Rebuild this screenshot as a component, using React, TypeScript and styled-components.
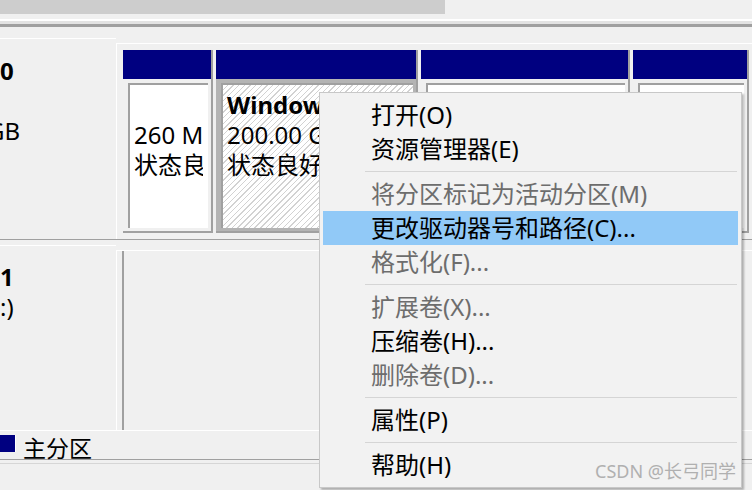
import React from "react";
import styled, { createGlobalStyle } from "styled-components";

const FONT = `"Noto Sans", "Noto Sans CJK SC", sans-serif`;

const GlobalStyle = createGlobalStyle`
  html, body {
    margin: 0;
    padding: 0;
    background: #f0f0f0;
  }
  body {
    font-family: ${FONT};
  }
`;

const Page = styled.div`
  position: relative;
  width: 752px;
  height: 490px;
  overflow: hidden;
  background: #f0f0f0;
  color: #000;
  font-family: ${FONT};
`;

const ScrollTrack = styled.div`
  height: 19px;
  background: #f0f0f0;
`;

const ScrollThumb = styled.div`
  width: 445px;
  height: 14px;
  background: #cdcdcd;
`;

const Splitter = styled.div`
  height: 3px;
  background: #e3e3e3;
  border-top: 2px solid #fff;
  border-bottom: 3px solid #a0a0a0;
`;

const DiskArea = styled.div`
  margin-top: 11px;
`;

const DiskRow = styled.div<{ $height: number; $divider?: boolean }>`
  display: grid;
  grid-template-columns: 116px 1fr;
  box-sizing: border-box;
  height: ${({ $height }) => $height}px;
  border-bottom: ${({ $divider }) => ($divider ? "1px solid #a0a0a0" : "none")};
`;

const LabelCell = styled.div<{ $top: number; $pad: number }>`
  margin-top: ${({ $top }) => $top}px;
  padding-top: ${({ $pad }) => $pad}px;
  border-top: 1px solid #fff;
  overflow: hidden;
  font-size: 24px;
  line-height: 30px;
  white-space: nowrap;
`;

const LabelLine = styled.div<{ $bold?: boolean; $shift?: number }>`
  height: 30px;
  font-weight: ${({ $bold }) => ($bold ? 700 : 400)};
  margin-left: ${({ $shift }) => $shift ?? 0}px;
`;

const RightCell = styled.div<{ $top: number }>`
  display: flex;
  margin-top: ${({ $top }) => $top}px;
  padding: 6px 0 0 6px;
  border-top: 1px solid #fff;
  border-left: 1px solid #fff;
  min-width: 0;
`;

const EmptyCell = styled(RightCell)`
  padding: 0 0 0 5px;
`;

const EmptyStrip = styled.div`
  width: 100%;
  border-left: 2px solid #a0a0a0;
`;

const Partitions = styled.div`
  display: flex;
  gap: 3px;
  height: 183px;
`;

const Column = styled.div<{ $width: number }>`
  display: flex;
  flex-direction: column;
  box-sizing: border-box;
  width: ${({ $width }) => $width}px;
  flex: none;
  border-right: 2px solid #a0a0a0;
`;

const ColumnHeader = styled.div`
  height: 29px;
  background: #000080;
`;

const ColumnBody = styled.div<{ $selected?: boolean }>`
  display: flex;
  flex: 1;
  min-height: 0;
  padding: 4px 3px 3px 5px;
  background: ${({ $selected }) => ($selected ? "#b4b4b4" : "#f0f0f0")};
  border-bottom: 2px solid #a0a0a0;
`;

const Volume = styled.div<{ $hatched?: boolean }>`
  display: flex;
  flex: 1;
  min-width: 0;
  padding: 5px 5px 5px 4px;
  border-top: 2px solid #a0a0a0;
  border-left: 2px solid #a0a0a0;
  background: ${({ $hatched }) =>
    $hatched
      ? "repeating-linear-gradient(135deg, #ffffff 0 3px, #d2d2d2 3px 4px)"
      : "#ffffff"};
`;

const VolumeText = styled.div`
  flex: 1;
  min-width: 0;
  overflow: hidden;
  white-space: nowrap;
  font-size: 24px;
  line-height: 30px;
`;

const VolumeName = styled.div`
  height: 30px;
  font-weight: 700;
`;

const VolumeLine = styled.div`
  height: 30px;
`;

const Legend = styled.div`
  display: flex;
  align-items: flex-start;
  box-sizing: border-box;
  height: 30px;
  padding-top: 4px;
  border-top: 1px solid #fff;
  border-bottom: 1px solid #a0a0a0;
`;

const Swatch = styled.span`
  width: 15px;
  height: 17px;
  background: #000080;
  border-right: 1px solid #fff;
`;

const LegendLabel = styled.span`
  margin-left: 7px;
  font-size: 23px;
  line-height: 26px;
`;

const FootLine = styled.div`
  margin-top: 3px;
  border-top: 1px solid #d6d6d6;
`;

const Menu = styled.div`
  position: absolute;
  left: 319px;
  top: 92px;
  width: 423px;
  box-sizing: border-box;
  padding: 5px 0;
  background: #f2f2f2;
  border: 1px solid #c8c8c8;
  box-shadow: 2px 2px 2px rgba(0, 0, 0, 0.28);
`;

const MenuItem = styled.div<{ $disabled?: boolean; $active?: boolean }>`
  height: 34px;
  margin: 0 3px;
  padding-left: 48px;
  font-size: 24px;
  line-height: 34px;
  white-space: nowrap;
  color: ${({ $disabled }) => ($disabled ? "#6d6d6d" : "#000")};
  background: ${({ $active }) => ($active ? "#91c9f7" : "transparent")};
`;

const MenuSeparator = styled.div`
  height: 1px;
  margin: 5px 4px 5px 45px;
  background: #d5d5d5;
`;

const Watermark = styled.div`
  position: absolute;
  right: 16px;
  bottom: 9px;
  font-size: 18px;
  line-height: 20px;
  color: #b0b0b0;
  white-space: nowrap;
`;

type MenuEntry =
  | { type: "sep" }
  | { type: "item"; label: string; disabled?: boolean; active?: boolean };

const menu: MenuEntry[] = [
  { type: "item", label: "打开(O)" },
  { type: "item", label: "资源管理器(E)" },
  { type: "sep" },
  { type: "item", label: "将分区标记为活动分区(M)", disabled: true },
  { type: "item", label: "更改驱动器号和路径(C)...", active: true },
  { type: "item", label: "格式化(F)...", disabled: true },
  { type: "sep" },
  { type: "item", label: "扩展卷(X)...", disabled: true },
  { type: "item", label: "压缩卷(H)..." },
  { type: "item", label: "删除卷(D)...", disabled: true },
  { type: "sep" },
  { type: "item", label: "属性(P)" },
  { type: "sep" },
  { type: "item", label: "帮助(H)" },
];

export default function App() {
  return (
    <Page>
      <GlobalStyle />
      <ScrollTrack>
        <ScrollThumb />
      </ScrollTrack>
      <Splitter />

      <DiskArea>
        <DiskRow $height={202} $divider>
          <LabelCell $top={0} $pad={17}>
            <LabelLine $bold>0</LabelLine>
            <LabelLine />
            <LabelLine $shift={-13}>GB</LabelLine>
          </LabelCell>
          <RightCell $top={5}>
            <Partitions>
              <Column $width={90}>
                <ColumnHeader />
                <ColumnBody>
                  <Volume>
                    <VolumeText>
                      <VolumeLine />
                      <VolumeLine>260 MB</VolumeLine>
                      <VolumeLine>状态良好 (EFI 系统分区)</VolumeLine>
                    </VolumeText>
                  </Volume>
                </ColumnBody>
              </Column>
              <Column $width={202}>
                <ColumnHeader />
                <ColumnBody $selected>
                  <Volume $hatched>
                    <VolumeText>
                      <VolumeName>Windows (C:)</VolumeName>
                      <VolumeLine>200.00 GB NTFS</VolumeLine>
                      <VolumeLine>状态良好 (启动, 页面文件)</VolumeLine>
                    </VolumeText>
                  </Volume>
                </ColumnBody>
              </Column>
              <Column $width={209}>
                <ColumnHeader />
                <ColumnBody>
                  <Volume />
                </ColumnBody>
              </Column>
              <Column $width={116}>
                <ColumnHeader />
                <ColumnBody>
                  <Volume />
                </ColumnBody>
              </Column>
            </Partitions>
          </RightCell>
        </DiskRow>

        <DiskRow $height={190}>
          <LabelCell $top={5} $pad={16}>
            <LabelLine $bold>1</LabelLine>
            <LabelLine>:)</LabelLine>
          </LabelCell>
          <EmptyCell $top={10}>
            <EmptyStrip />
          </EmptyCell>
        </DiskRow>
      </DiskArea>

      <Legend>
        <Swatch />
        <LegendLabel>主分区</LegendLabel>
      </Legend>
      <FootLine />

      <Menu>
        {menu.map((entry, i) =>
          entry.type === "sep" ? (
            <MenuSeparator key={i} />
          ) : (
            <MenuItem key={i} $disabled={entry.disabled} $active={entry.active}>
              {entry.label}
            </MenuItem>
          )
        )}
      </Menu>

      <Watermark>CSDN @长弓同学</Watermark>
    </Page>
  );
}
